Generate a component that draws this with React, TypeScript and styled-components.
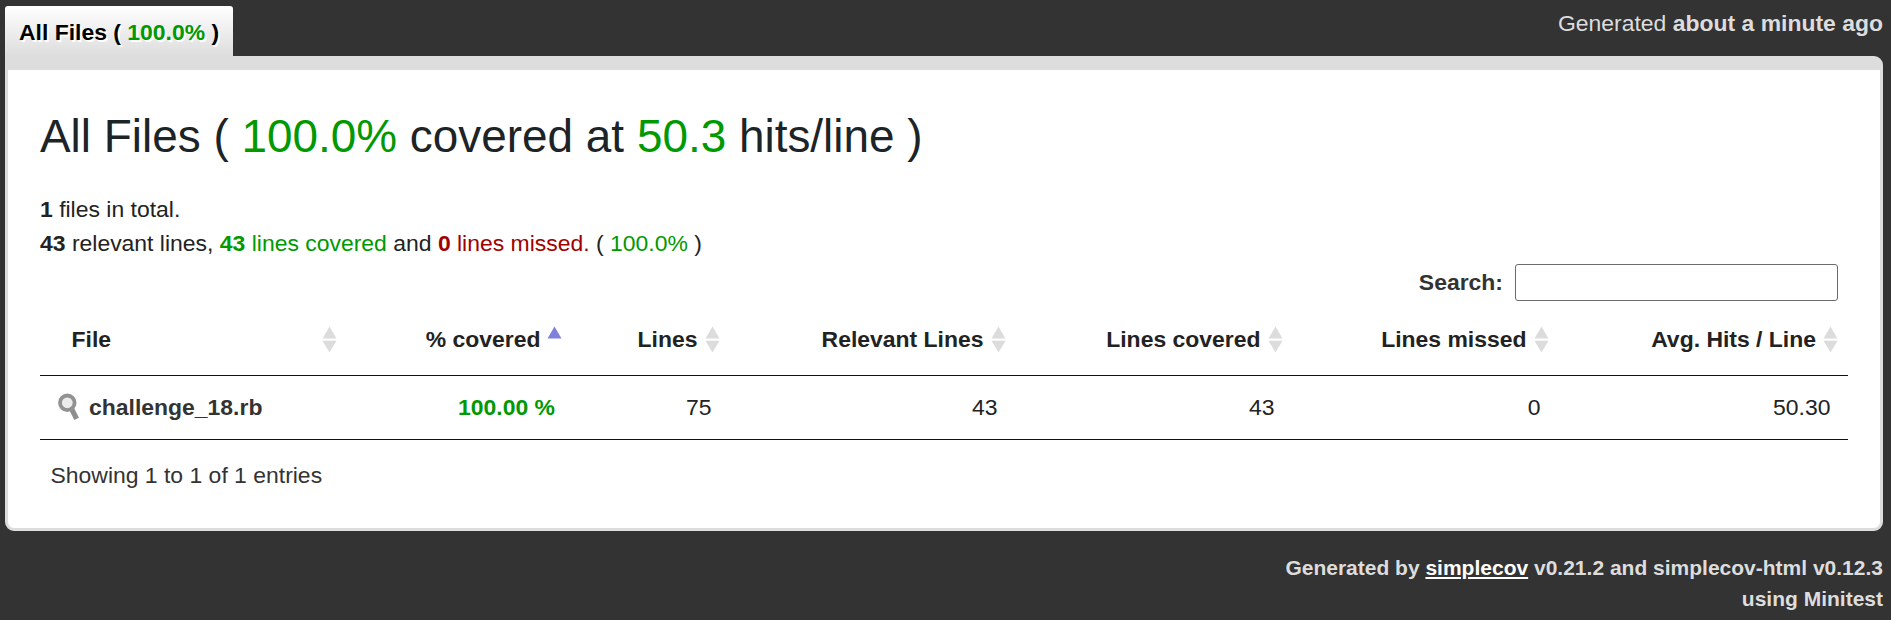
import React from "react";
import styled, { createGlobalStyle } from "styled-components";

const GlobalStyle = createGlobalStyle`
  * { box-sizing: border-box; }
  body {
    margin: 0;
    background: #333;
    color: #222;
    font-family: "Liberation Sans", Arial, sans-serif;
    font-size: 22.95px;
    line-height: 34px;
  }
`;

const Page = styled.div`
  height: 620px;
  padding: 6px 8px 0 5px;
`;

const TopBar = styled.header`
  display: flex;
  justify-content: space-between;
  align-items: flex-start;
  height: 50px;
`;

const Tab = styled.a`
  height: 50px;
  width: 228px;
  padding: 9px 0 0 14px;
  border-radius: 3px 3px 0 0;
  background: linear-gradient(#fff, #ddd);
  color: #000;
  font-weight: bold;
  white-space: nowrap;
  text-shadow: 1.8px 1.8px 0 #fff;
`;

const Timestamp = styled.div`
  color: #ddd;
`;

const Content = styled.main`
  padding: 39px 32px 36px;
  background: #fff;
  border: 3px solid #ddd;
  border-top-width: 14px;
  border-radius: 0 9px 9px 9px;
`;

const Title = styled.h1`
  margin: 0 0 29px;
  color: #1c2427;
  font-size: 45.9px;
  font-weight: normal;
  line-height: 54px;
`;

const Tone = styled.span<{ $bad?: boolean }>`
  color: ${(p) => (p.$bad ? "#a00000" : "#009900")};
`;

const Summary = styled.div``;

const Filter = styled.label`
  display: flex;
  justify-content: flex-end;
  gap: 12px;
  height: 37px;
  margin: 4px 10px 0 0;
  color: #333;
  font-weight: bold;
  line-height: 36px;
`;

const SearchInput = styled.input`
  width: 323px;
  height: 37px;
  padding: 2px 6px;
  background: #fff;
  border: 1px solid #6b6b6b;
  border-radius: 3px;
  font: inherit;
`;

const Table = styled.table`
  width: 1808px;
  table-layout: fixed;
  border-collapse: separate;
  border-spacing: 0;
  border-bottom: 1px solid #111;
`;

const Col = styled.col<{ $w: number }>`
  width: ${(p) => p.$w}px;
`;

const HeadCell = styled.th`
  height: 75px;
  padding: 21px 10.5px 19px 31.5px;
  border-bottom: 1px solid #111;
`;

const HeadInner = styled.div<{ $spread?: boolean; $loose?: boolean }>`
  display: flex;
  justify-content: ${(p) => (p.$spread ? "space-between" : "flex-end")};
  gap: ${(p) => (p.$loose ? 7.5 : 6.5)}px;
  white-space: nowrap;
`;

const SortSvg = styled.svg`
  width: 15px;
  height: 34px;
  flex: none;
`;

const Cell = styled.td<{ $left?: boolean; $strong?: boolean; $loose?: boolean }>`
  padding: 14px ${(p) => (p.$loose ? 19 : 17.5)}px 15px 17.5px;
  text-align: ${(p) => (p.$left ? "left" : "right")};
  color: ${(p) => (p.$strong ? "#009900" : "#222")};
  font-weight: ${(p) => (p.$strong ? "bold" : "normal")};
`;

const FileLink = styled.a`
  display: flex;
  gap: 9.5px;
  color: #333;
  font-weight: bold;
`;

const LensSvg = styled.svg`
  width: 22px;
  height: 34px;
  flex: none;
`;

const Info = styled.div`
  padding: 18px 0 0 10.5px;
  color: #333;
`;

const Footer = styled.footer`
  margin-top: 21px;
  color: #ddd;
  font-size: 21px;
  font-weight: bold;
  line-height: 31px;
  text-align: right;
`;

const FooterLink = styled.a`
  color: #fff;
  text-decoration: underline;
`;

const SortIcon = ({ active }: { active?: boolean }) => (
  <SortSvg viewBox="0 0 15 34">
    <path d="M7.5 4.5 L14.5 16.6 H0.5 Z" fill={active ? "#8080dc" : "#dcdcdc"} />
    {!active && <path d="M0.5 18.8 H14.5 L7.5 30.6 Z" fill="#dcdcdc" />}
  </SortSvg>
);

const LensIcon = () => (
  <LensSvg viewBox="0 0 22 34">
    <path d="M13.4 18.4 L18.6 28.8" stroke="#8f8f8f" strokeWidth="5.2" />
    <circle cx="9.3" cy="12.8" r="7.3" fill="#ececec" stroke="#929292" strokeWidth="3.8" />
  </LensSvg>
);

const columns = [
  { label: "File", width: 307.5 },
  { label: "% covered", width: 225 },
  { label: "Lines", width: 158, loose: true },
  { label: "Relevant Lines", width: 286, loose: true },
  { label: "Lines covered", width: 277, loose: true },
  { label: "Lines missed", width: 266, loose: true },
  { label: "Avg. Hits / Line", width: 288.5 },
];

export default function App() {
  return (
    <Page>
      <GlobalStyle />
      <TopBar>
        <Tab>
          All Files ( <Tone>100.0%</Tone> )
        </Tab>
        <Timestamp>
          Generated <b>about a minute ago</b>
        </Timestamp>
      </TopBar>
      <Content>
        <Title>
          All Files ( <Tone>100.0%</Tone> covered at <Tone>50.3</Tone> hits/line )
        </Title>
        <Summary>
          <b>1</b> files in total.
        </Summary>
        <Summary>
          <b>43</b> relevant lines, <Tone><b>43</b> lines covered</Tone> and{" "}
          <Tone $bad><b>0</b> lines missed.</Tone> ( <Tone>100.0%</Tone> )
        </Summary>
        <Filter>
          Search:
          <SearchInput type="search" />
        </Filter>
        <Table>
          <colgroup>
            {columns.map((c) => (
              <Col key={c.label} $w={c.width} />
            ))}
          </colgroup>
          <thead>
            <tr>
              {columns.map((c, i) => (
                <HeadCell key={c.label}>
                  <HeadInner $spread={i === 0} $loose={c.loose}>
                    {c.label}
                    <SortIcon active={i === 1} />
                  </HeadInner>
                </HeadCell>
              ))}
            </tr>
          </thead>
          <tbody>
            <tr>
              <Cell $left>
                <FileLink>
                  <LensIcon />
                  challenge_18.rb
                </FileLink>
              </Cell>
              <Cell $strong>100.00 %</Cell>
              <Cell $loose>75</Cell>
              <Cell $loose>43</Cell>
              <Cell $loose>43</Cell>
              <Cell $loose>0</Cell>
              <Cell>50.30</Cell>
            </tr>
          </tbody>
        </Table>
        <Info>Showing 1 to 1 of 1 entries</Info>
      </Content>
      <Footer>
        Generated by <FooterLink>simplecov</FooterLink> v0.21.2 and simplecov-html v0.12.3
        <br />
        using Minitest
      </Footer>
    </Page>
  );
}
